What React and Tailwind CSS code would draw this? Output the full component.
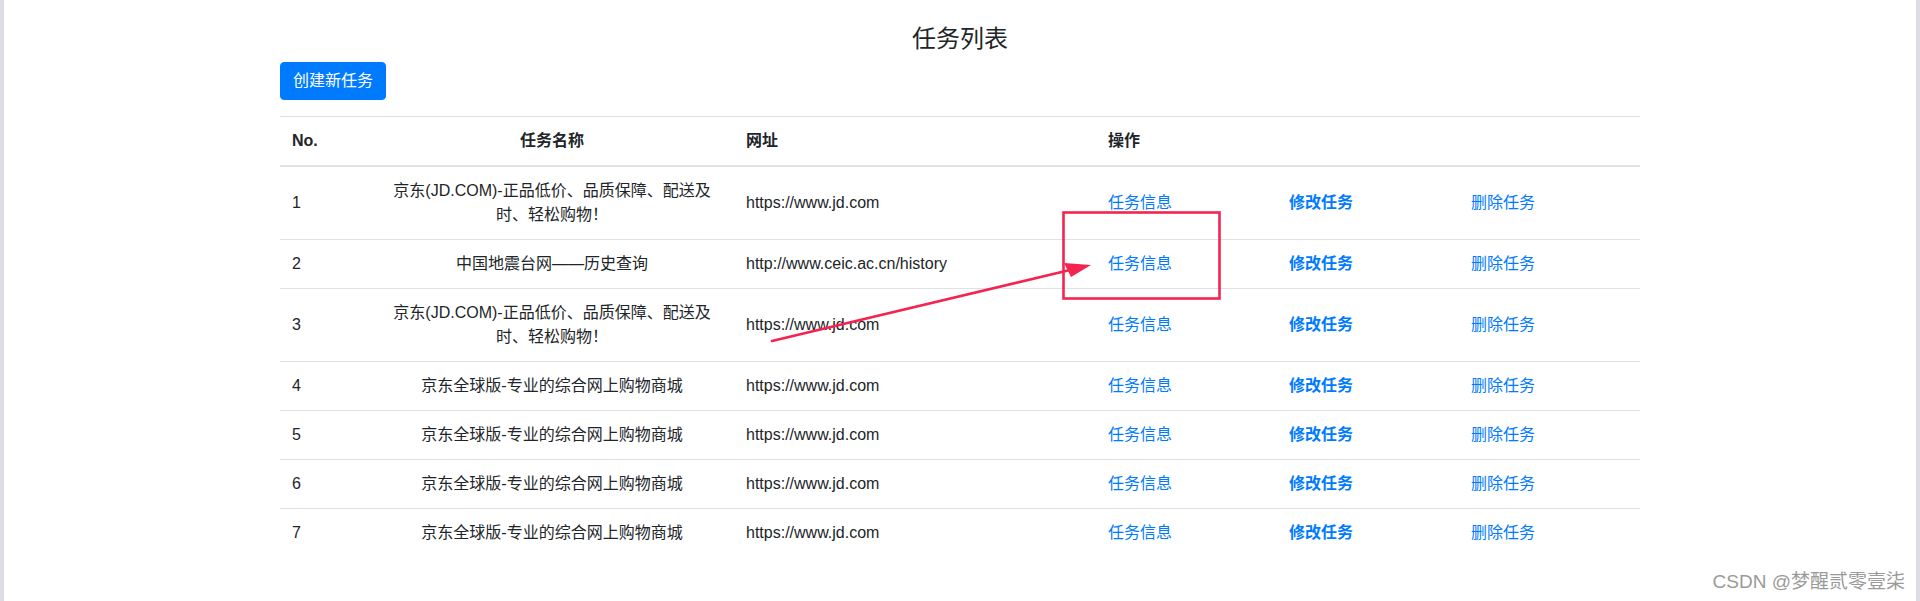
const tasks = [
  { id: 1, name: '京东(JD.COM)-正品低价、品质保障、配送及时、轻松购物！', url: 'https://www.jd.com' },
  { id: 2, name: '中国地震台网——历史查询', url: 'http://www.ceic.ac.cn/history' },
  { id: 3, name: '京东(JD.COM)-正品低价、品质保障、配送及时、轻松购物！', url: 'https://www.jd.com' },
  { id: 4, name: '京东全球版-专业的综合网上购物商城', url: 'https://www.jd.com' },
  { id: 5, name: '京东全球版-专业的综合网上购物商城', url: 'https://www.jd.com' },
  { id: 6, name: '京东全球版-专业的综合网上购物商城', url: 'https://www.jd.com' },
  { id: 7, name: '京东全球版-专业的综合网上购物商城', url: 'https://www.jd.com' },
]

function Annotation() {
  // red box + arrow drawn on top of the screenshot
  return (
    <svg className="pointer-events-none absolute inset-0" width="1920" height="601" viewBox="0 0 1920 601">
      <rect x="1063.5" y="212.5" width="156" height="86" fill="none" stroke="#f5234f" strokeWidth="2.6" />
      <line x1="772" y1="341" x2="1070" y2="270" stroke="#f5234f" strokeWidth="2.6" strokeLinecap="round" />
      <polygon points="1091,265 1064,263 1071,277" fill="#f5234f" />
    </svg>
  )
}

export default function App() {
  return (
    <div className="relative flex h-[601px] w-full overflow-hidden bg-white font-['Liberation_Sans','Noto_Sans_CJK_SC',sans-serif] text-[16px] leading-6 text-[#212529]">
      <div className="w-[4px] shrink-0 bg-[#dcdee3]" />

      <main className="flex-1">
        <div className="mx-auto w-[1360px] pt-[24px]">
          <h4 className="mb-[9px] text-center text-[24px] font-normal leading-[29px]">任务列表</h4>

          <button type="button" className="rounded border border-[#007bff] bg-[#007bff] px-3 py-[6px] text-[16px] leading-6 text-white">
            创建新任务
          </button>

          <table className="mt-4 w-full table-fixed border-separate border-spacing-0">
            <colgroup>
              <col className="w-[90px]" />
              <col className="w-[364px]" />
              <col className="w-[362px]" />
              <col className="w-[181px]" />
              <col className="w-[182px]" />
              <col className="w-[181px]" />
            </colgroup>
            <thead>
              <tr>
                <th className="border-t border-b-2 border-[#dee2e6] p-3 text-left font-bold">No.</th>
                <th className="border-t border-b-2 border-[#dee2e6] p-3 text-center font-bold">任务名称</th>
                <th className="border-t border-b-2 border-[#dee2e6] p-3 text-left font-bold">网址</th>
                <th colSpan={3} className="border-t border-b-2 border-[#dee2e6] p-3 text-left font-bold">操作</th>
              </tr>
            </thead>
            <tbody>
              {tasks.map((task, i) => {
                const cell = i === 0 ? 'p-3 align-middle' : 'border-t border-[#dee2e6] p-3 align-middle'
                return (
                  <tr key={task.id}>
                    <td className={cell}>{task.id}</td>
                    <td className={cell + ' text-center'}>{task.name}</td>
                    <td className={cell}>{task.url}</td>
                    <td className={cell}>
                      <a href="#" className="text-[#007bff]">任务信息</a>
                    </td>
                    <td className={cell}>
                      <a href="#" className="font-bold text-[#007bff]">修改任务</a>
                    </td>
                    <td className={cell}>
                      <a href="#" className="text-[#007bff]">删除任务</a>
                    </td>
                  </tr>
                )
              })}
            </tbody>
          </table>
        </div>
      </main>

      <div className="w-[4px] shrink-0 bg-[#dcdee3]" />

      <Annotation />

      <span className="absolute right-[15px] top-[570px] text-[19px] leading-6 text-[#9a9a9a]">CSDN @梦醒贰零壹柒</span>
    </div>
  )
}
